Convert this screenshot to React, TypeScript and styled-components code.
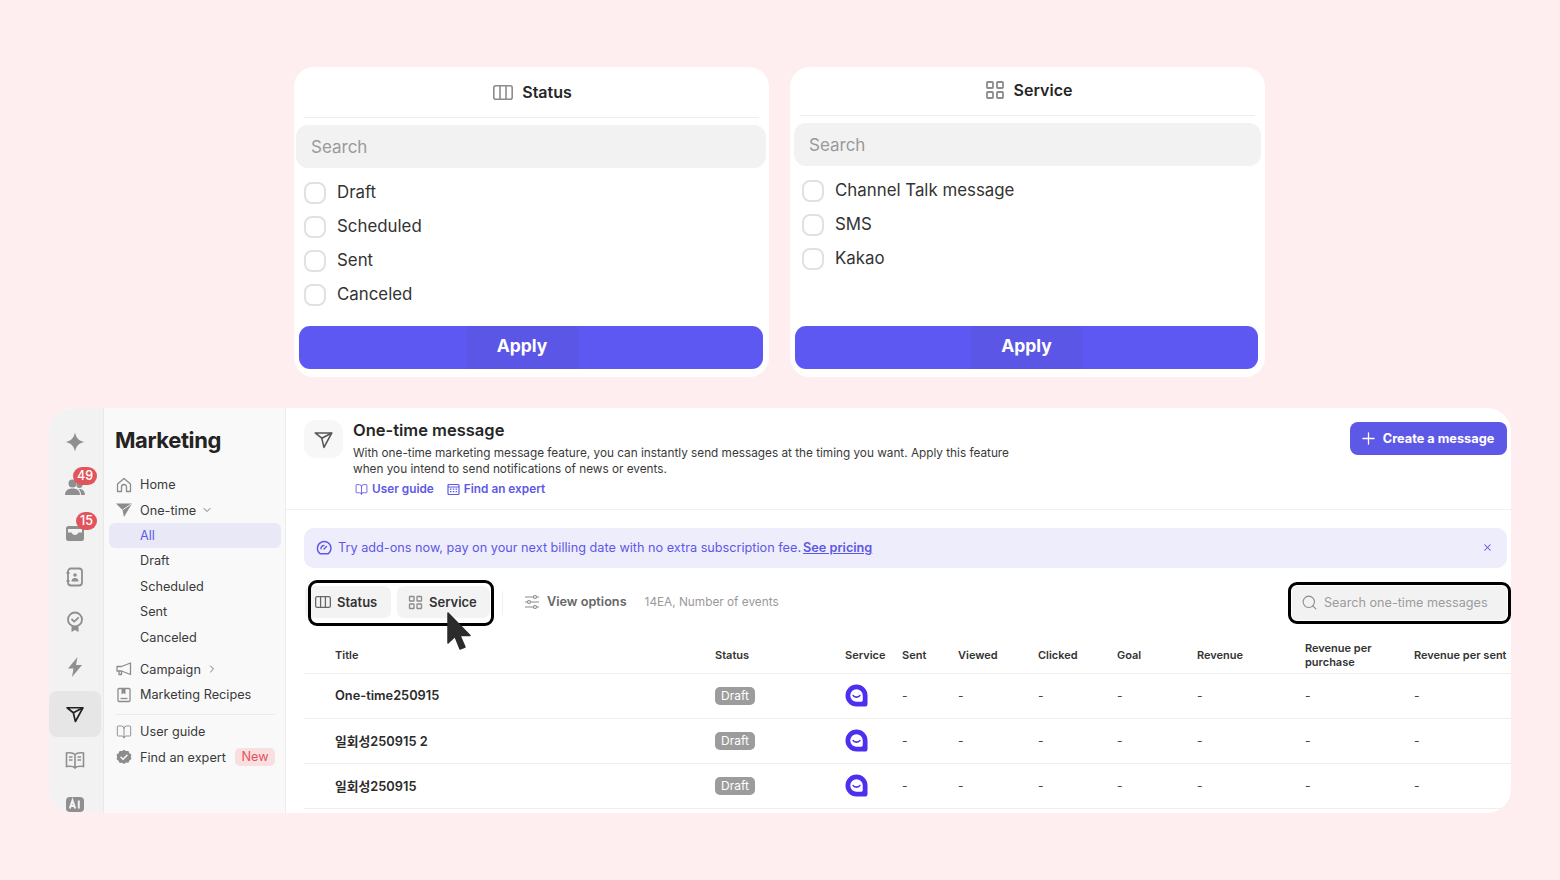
import React from 'react';
import styled, { createGlobalStyle } from 'styled-components';
import {
  BookOpen,
  ChevronDown,
  ChevronRight,
  Plus,
  Search,
  X,
} from 'lucide-react';

const GlobalStyle = createGlobalStyle`
  html, body {
    margin: 0;
    padding: 0;
    height: 880px;
    overflow: hidden;
    background: #feeef0;
  }
  body {
    font-family: Inter, "Noto Sans CJK KR", "Liberation Sans", sans-serif;
    color: #2a2a2a;
  }
  * { box-sizing: border-box; }
`;

const Page = styled.div`
  width: 1560px;
  height: 880px;
  padding: 67px 0 0 49px;
`;

const CardRow = styled.div`
  display: flex;
  gap: 21px;
  margin-left: 245px;
`;

const Card = styled.section`
  width: 475px;
  height: 310px;
  background: #fff;
  border-radius: 20px;
  display: flex;
  flex-direction: column;
`;

const CardHeader = styled.header<{ $height: number; $padLeft: number; $padBottom: number }>`
  height: ${p => p.$height}px;
  margin: 0 10px;
  padding: 0 0 ${p => p.$padBottom}px ${p => p.$padLeft}px;
  border-bottom: 1px solid #eeeeee;
  display: flex;
  align-items: center;
  justify-content: center;
  gap: 9px;
  font-size: 16px;
  font-weight: 600;
  color: #262626;
`;

const CardSearch = styled.div<{ $left: number; $right: number }>`
  height: 43px;
  margin: 7px ${p => p.$right}px 0 ${p => p.$left}px;
  padding-left: 15px;
  border-radius: 12px;
  background: #f2f2f2;
  display: flex;
  align-items: center;
  font-size: 17px;
  color: #9a9a9a;
`;

const CheckList = styled.ul<{ $left: number }>`
  list-style: none;
  margin: 8px 0 0;
  padding: 0 0 0 ${p => p.$left}px;
`;

const CheckItem = styled.li`
  height: 34px;
  display: flex;
  align-items: center;
  gap: 11px;
  font-size: 16.85px;
  color: #333;
`;

const CheckBox = styled.span`
  width: 22px;
  height: 22px;
  border-radius: 8px;
  border: 2px solid #e1e1e1;
  background: #fff;
`;

const CheckLabel = styled.span`
  margin-bottom: 2px;
`;

const ApplyButton = styled.button<{ $right: number; $shift: number }>`
  margin: auto ${p => p.$right}px 8px 5px;
  height: 43px;
  border: 0;
  border-radius: 11px;
  background: #5e58f2;
  color: #fff;
  font: 700 17.5px Inter, sans-serif;
  display: flex;
  justify-content: center;
  padding: 0 ${p => p.$shift}px 0 0;

  span {
    width: 111px;
    height: 100%;
    padding-bottom: 4px;
    display: flex;
    align-items: center;
    justify-content: center;
    background: #5c56e6;
  }
`;

const Panel = styled.div`
  width: 1462px;
  height: 405px;
  margin-top: 31px;
  background: #fff;
  border-radius: 24px;
  overflow: hidden;
  display: flex;
`;

const Rail = styled.nav`
  width: 55px;
  flex-shrink: 0;
  padding-top: 11px;
  background: #f2f2f2;
  border-right: 1px solid #e9e9e9;
`;

const RailItem = styled.div<{ $active?: boolean }>`
  position: relative;
  width: 52px;
  height: ${p => (p.$active ? 46 : 45)}px;
  margin-top: ${p => (p.$active ? 2 : 0)}px;
  border-radius: 8px;
  display: flex;
  align-items: center;
  justify-content: center;
  background: ${p => (p.$active ? '#e6e6e6' : 'transparent')};
  color: ${p => (p.$active ? '#222' : '#8f8f8f')};
`;

const CountBadge = styled.span<{ $left: number; $top: number }>`
  position: absolute;
  left: ${p => p.$left}px;
  top: ${p => p.$top}px;
  height: 18px;
  padding: 0 4px;
  border-radius: 9px;
  background: #e2545c;
  color: #fff;
  font-size: 12.5px;
  line-height: 18px;
  font-weight: 500;
`;

const Sidebar = styled.aside`
  width: 182px;
  flex-shrink: 0;
  background: #f9f9f9;
  border-right: 1px solid #ececec;
  padding: 16px 4px 0 5px;
`;

const SideTitle = styled.h2`
  margin: 0 0 16px 6px;
  font-size: 22px;
  line-height: 32px;
  font-weight: 700;
  letter-spacing: -0.4px;
  color: #232323;
`;

const SideRow = styled.div<{ $active?: boolean; $gapTop?: number }>`
  height: 25.4px;
  margin-top: ${p => p.$gapTop ?? 0}px;
  padding-left: 7px;
  border-radius: 6px;
  display: flex;
  align-items: center;
  gap: 8px;
  font-size: 12.7px;
  color: ${p => (p.$active ? '#5e58f2' : '#3a3a3a')};
  background: ${p => (p.$active ? '#e9e8f6' : 'transparent')};
  svg { flex-shrink: 0; }
`;

const SubLabel = styled.span`
  margin-left: 24px;
`;

const RowChevron = styled.span`
  display: flex;
  margin-left: -3px;
  color: #777;
`;

const SideDivider = styled.div`
  height: 1px;
  margin: 6px 6px 4.5px;
  background: #ebebeb;
`;

const NewTag = styled.span`
  margin-left: 1px;
  padding: 0 6.500px;
  height: 18px;
  border-radius: 5px;
  background: #fadfe1;
  color: #e2545c;
  font-size: 12.7px;
  line-height: 18px;
`;

const Main = styled.main`
  flex: 1;
  min-width: 0;
  display: flex;
  flex-direction: column;
`;

const PageHeader = styled.header`
  height: 102px;
  flex-shrink: 0;
  padding: 12px 4px 0 18px;
  border-bottom: 1px solid #f0f0f0;
  display: flex;
  align-items: flex-start;
  gap: 10px;
`;

const HeaderIcon = styled.div`
  width: 39px;
  height: 38px;
  border-radius: 12px;
  background: #f7f7f7;
  color: #555;
  display: flex;
  align-items: center;
  justify-content: center;
`;

const HeaderText = styled.div`
  flex: 1;
`;

const HeaderTitle = styled.h1`
  margin: -1px 0 0;
  font-size: 16.5px;
  line-height: 22px;
  font-weight: 600;
  color: #262626;
`;

const HeaderDesc = styled.p`
  margin: 4px 0 0;
  font-size: 11.77px;
  line-height: 16px;
  color: #3a3a3a;
  width: 680px;
`;

const LinkRow = styled.div`
  margin: 5px 0 0 2px;
  display: flex;
  gap: 13px;
`;

const GuideLink = styled.a`
  display: flex;
  align-items: center;
  gap: 4px;
  font-size: 11.8px;
  font-weight: 600;
  color: #5e58e6;
`;

const CreateButton = styled.button`
  height: 33px;
  width: 157px;
  margin-top: 2px;
  padding: 0 4px 0 0;
  border: 0;
  border-radius: 8px;
  background: #5e58e6;
  color: #fff;
  font: 700 12.75px Inter, sans-serif;
  display: flex;
  align-items: center;
  justify-content: center;
  gap: 5px;
`;

const Banner = styled.div`
  height: 40px;
  flex-shrink: 0;
  margin: 18px 4px 0 18px;
  padding: 0 14px 1px 12px;
  border-radius: 10px;
  background: #eeedfb;
  display: flex;
  align-items: center;
  gap: 6px;
  font-size: 12.7px;
  color: #5e58e6;

  b {
    font-weight: 600;
    text-decoration: underline;
    margin-left: -4px;
  }
  svg:last-child { margin-left: auto; }
`;

const Toolbar = styled.div`
  height: 46px;
  flex-shrink: 0;
  margin: 12px 0 0 19px;
  display: flex;
  align-items: center;
`;

const FilterGroup = styled.div`
  position: relative;
  height: 32px;
  margin-bottom: 2px;
  display: flex;
  gap: 6px;

  /* annotation frame drawn over the two chips */
  &::after {
    content: '';
    box-sizing: border-box;
    position: absolute;
    left: 3px;
    top: -6px;
    width: 186px;
    height: 46px;
    border: 3.5px solid #000;
    border-radius: 9px;
    pointer-events: none;
  }
`;

const FilterChip = styled.div<{ $width: number; $pad: number }>`
  width: ${p => p.$width}px;
  height: 32px;
  border-radius: 7px;
  background: #f3f3f3;
  display: flex;
  align-items: center;
  gap: 6px;
  padding-left: ${p => p.$pad}px;
  font-size: 13px;
  font-weight: 600;
  color: #333;
`;

const ToolbarDivider = styled.span`
  width: 1px;
  height: 24px;
  margin-left: 12px;
  background: #f0f0f0;
`;

const ViewOptions = styled.div`
  margin: 0 0 3px 21px;
  display: flex;
  align-items: center;
  gap: 7px;
  font-size: 12.7px;
  font-weight: 600;
  color: #666;
`;

const EventCount = styled.span`
  margin: 0 0 2px 18px;
  font-size: 11.8px;
  color: #9a9a9a;
`;

const SearchOutline = styled.div`
  margin-left: auto;
  width: 223px;
  height: 42px;
  border: 3.5px solid #000;
  border-radius: 9px;
  background: #fff;
  padding: 1px;
`;

const SearchField = styled.div`
  height: 100%;
  border-radius: 6px;
  background: #f2f2f2;
  display: flex;
  align-items: center;
  gap: 6px;
  padding: 0 0 2px 9px;
  font-size: 12.65px;
  color: #9c9c9c;
`;

const columns = '380px 130px 57px 56px 80px 79px 80px 108px 109px 1fr';

const TableHead = styled.div`
  height: 36px;
  margin: 12px 0 0 18px;
  padding: 0 0 2px 31px;
  border-bottom: 1px solid #eeeeee;
  display: grid;
  grid-template-columns: ${columns};
  align-items: center;
  font-size: 11px;
  font-weight: 600;
  line-height: 14px;
  color: #333;
  flex-shrink: 0;
  span { white-space: nowrap; }
`;

const TableRow = styled.div`
  height: 45px;
  margin-left: 18px;
  padding: 0 0 2px 31px;
  border-bottom: 1px solid #eeeeee;
  display: grid;
  grid-template-columns: ${columns};
  align-items: center;
  font-size: 12px;
  color: #444;
  flex-shrink: 0;
`;

const RowTitle = styled.span`
  font-size: 12.8px;
  font-weight: 600;
  color: #2b2b2b;
`;

const DraftBadge = styled.span`
  width: 40px;
  height: 18px;
  margin-top: 2px;
  border-radius: 5px;
  background: #9c9c9c;
  color: #fff;
  font-size: 12px;
  line-height: 18px;
  text-align: center;
`;

const Cursor = styled.svg`
  position: absolute;
  left: 141px;
  top: 25px;
  z-index: 2;
`;

/* drawn icons, not in the packages */

const Plane = ({ size = 20, width = 2 }: { size?: number; width?: number }) => (
  <svg width={size} height={size} viewBox="0 0 24 24" fill="none" stroke="currentColor" strokeWidth={width} strokeLinejoin="round">
    <path d="M2.5 4.5h19L12.5 21 10 10.5z" />
    <path d="M10 10.5 21.5 4.5" />
  </svg>
);

const WideColumns = ({ width = 20, color = '#8c8c8c' }: { width?: number; color?: string }) => (
  <svg width={width} height={width * 0.75} viewBox="0 0 20 15" fill="none" stroke={color} strokeWidth="1.600">
    <rect x="0.800" y="0.800" width="18.400" height="13.400" rx="2" />
    <path d="M7 .8v13.400M13 .8v13.400" />
  </svg>
);

const Grid4 = ({ size = 20 }: { size?: number }) => (
  <svg width={size} height={size} viewBox="0 0 20 20" fill="none" stroke="#8c8c8c" strokeWidth="1.8">
    <rect x="2" y="2" width="6" height="6" rx="0.8" />
    <rect x="12" y="2" width="6" height="6" rx="0.8" />
    <rect x="2" y="12" width="6" height="6" rx="0.8" />
    <rect x="12" y="12" width="6" height="6" rx="0.8" />
  </svg>
);

const Sparkle = () => (
  <svg width="20" height="20" viewBox="0 0 20 20" fill="currentColor">
    <path d="M10 .5c1 5.200 3.800 8.500 9.500 9.500-5.700 1-8.500 4.300-9.500 9.500-1-5.200-3.800-8.500-9.500-9.500C6.200 9 9 5.700 10 .5z" />
  </svg>
);

const People = () => (
  <svg width="22" height="20" viewBox="0 0 22 20" fill="currentColor">
    <circle cx="8.500" cy="6.500" r="4" />
    <circle cx="15.500" cy="8" r="3" />
    <path d="M1 18c0-4.500 3.200-6.500 7.500-6.500S16 13.500 16 18zM17 18c0-2.500-.8-4.500-2.300-6 3.600-.3 6.300 1.800 6.300 6z" />
  </svg>
);

const Inbox = () => (
  <svg width="20" height="17" viewBox="0 0 20 17" fill="currentColor" style={{ marginTop: 3 }}>
    <path d="M3.500 1h13A2.500 2.500 0 0 1 19 3.500v10a2.500 2.500 0 0 1-2.500 2.500h-13A2.500 2.500 0 0 1 1 13.500v-10A2.500 2.500 0 0 1 3.500 1zM3 4v3.500h3.500c.5 1.500 1.800 2.500 3.500 2.500s3-1 3.500-2.500H17V4z" fillRule="evenodd" />
  </svg>
);

const Contact = () => (
  <svg width="20" height="20" viewBox="0 0 20 20" fill="none" stroke="currentColor" strokeWidth="1.8">
    <rect x="3" y="1.500" width="14" height="17" rx="3" />
    <path d="M1.500 6h3M1.500 14h3" />
    <circle cx="10" cy="8" r="1.800" fill="currentColor" stroke="none" />
    <path d="M6.500 14.500c0-2.400 1.600-3.500 3.500-3.500s3.500 1.100 3.500 3.500z" fill="currentColor" stroke="none" />
  </svg>
);

const Award = () => (
  <svg width="20" height="22" viewBox="0 0 20 22" fill="none" stroke="currentColor" strokeWidth="1.8">
    <circle cx="10" cy="8.500" r="7" />
    <path d="M7 8.500l2.200 2.200L13.200 6.800" strokeLinecap="round" strokeLinejoin="round" />
    <path d="M6.500 15.500V21l3.500-2 3.500 2v-5.500z" fill="currentColor" stroke="none" />
  </svg>
);

const Bolt = () => (
  <svg width="18" height="20" viewBox="0 0 18 20" fill="currentColor">
    <path d="M11.500 0 2 11.500h5.500L6 20l10-12h-6z" />
  </svg>
);

const Magazine = () => (
  <svg width="20" height="20" viewBox="0 0 20 20" fill="none" stroke="currentColor" strokeWidth="1.6">
    <path d="M10 4.500C8.500 3 5 2.500 1.500 3v13.500c3.500-.5 7-.2 8.500 1.500 1.500-1.700 5-2 8.500-1.500V3C15 2.500 11.500 3 10 4.500zM10 4.500V18" />
    <path d="M4 7h3.500M4 10h3.500M12.500 7H16M12.500 10H16" />
  </svg>
);

const AiMark = () => (
  <svg width="18" height="15" viewBox="0 0 18 15">
    <rect width="18" height="15" rx="4" fill="currentColor" />
    <path d="M3.800 11.500 6.500 3.500 9.200 11.500M4.700 9h3.600M12.800 3.500v8" stroke="#f2f2f2" strokeWidth="2" fill="none" />
  </svg>
);

const Home = () => (
  <svg width="16" height="16" viewBox="0 0 16 16" fill="none" stroke="#8c8c8c" strokeWidth="1.300" strokeLinejoin="round">
    <path d="M1.500 7 8 1.500 14.500 7v7.500h-4V10a2.500 2.500 0 0 0-5 0v4.500h-4z" />
  </svg>
);

const SolidPlane = () => (
  <svg width="16" height="16" viewBox="0 0 16 16" fill="#8c8c8c">
    <path d="M0 1.500h16L8 15l-1.500-7z" />
    <path d="M15.500 1.800 6.500 8" stroke="#f9f9f9" strokeWidth="0.900" />
  </svg>
);

const Megaphone = () => (
  <svg width="16" height="16" viewBox="0 0 16 16" fill="none" stroke="#8c8c8c" strokeWidth="1.300" strokeLinejoin="round">
    <path d="M1 5.500h4.500L14.500 2v11.500L5.500 10H1zM3 10v3.500h2.500V10.200" />
  </svg>
);

const Recipe = () => (
  <svg width="16" height="16" viewBox="0 0 16 16" fill="none" stroke="#8c8c8c" strokeWidth="1.300">
    <rect x="2" y="1.500" width="12" height="13" rx="1" />
    <path d="M5.500 1.500v6l2-1.500 2 1.500v-6z" fill="#8c8c8c" stroke="none" />
    <path d="M4.500 11.500h7" />
  </svg>
);

const ExpertSeal = () => (
  <svg width="16" height="16" viewBox="0 0 16 16">
    <path d="M8 0l2 1.300 2.400-.1 1 2.200 2 1.300-.5 2.300.5 2.300-2 1.400-1 2.200-2.400-.1L8 14.300 6 13l-2.400.1-1-2.200-2-1.400.5-2.300L.6 4.700l2-1.300 1-2.200L6 1.300z" transform="translate(0 .8)" fill="#8c8c8c" />
    <path d="M5 8.200l2.100 2 3.900-4" stroke="#f9f9f9" strokeWidth="1.500" fill="none" strokeLinecap="round" />
  </svg>
);

const Calendar = () => (
  <svg width="13" height="13" viewBox="0 0 13 13" fill="none" stroke="#5e58e6" strokeWidth="1.200">
    <rect x="1" y="1.500" width="11" height="10" rx="1" />
    <path d="M1 4h11" />
    <path d="M3 6.200h1.500M5.800 6.200h1.500M8.600 6.200h1.500M3 8.700h1.500M5.800 8.700h1.500M8.600 8.700h1.500" />
  </svg>
);

const Gauge = () => (
  <svg width="16" height="16" viewBox="0 0 16 16" fill="none" stroke="#5e58e6" strokeWidth="1.400" strokeLinecap="round">
    <path d="M4.200 13.800A6.800 6.800 0 1 1 15 8c0 2.500-1 4.500-3 5.800z" />
    <path d="M5 8.800A3 3 0 0 1 8 5.500M8 9l2.500-2.500" />
  </svg>
);

const Sliders = () => (
  <svg width="16" height="16" viewBox="0 0 16 16" fill="none" stroke="#8c8c8c" strokeWidth="1.100">
    <path d="M1 3h8.500M12.500 3H15M1 8h2.500M6.500 8H15M1 13h8.500M12.500 13H15" />
    <circle cx="11" cy="3" r="1.500" />
    <circle cx="5" cy="8" r="1.500" />
    <circle cx="11" cy="13" r="1.500" />
  </svg>
);

const ChannelLogo = () => (
  <svg width="23" height="23" viewBox="0 0 24 24">
    <path d="M12 .5a11.500 11.500 0 1 0 0 23h8.500a3 3 0 0 0 3-3V12A11.500 11.500 0 0 0 12 .5z" fill="#4c30f0" />
    <path d="M12 5.500a6.500 6.500 0 1 0 0 13h5a1.500 1.500 0 0 0 1.500-1.500v-5A6.500 6.500 0 0 0 12 5.500z" fill="#fff" />
    <path d="M8.500 12c1 2.200 6 2.200 7 0" stroke="#4c30f0" strokeWidth="1.700" fill="none" strokeLinecap="round" />
  </svg>
);

interface FilterCardProps {
  icon: React.ReactNode;
  title: string;
  options: string[];
  headerHeight: number;
  headerPad: [number, number];
  searchInset: [number, number];
  listLeft: number;
  applyRight: number;
  applyShift: number;
}

const FilterCard: React.FC<FilterCardProps> = ({ icon, title, options, headerHeight, headerPad, searchInset, listLeft, applyRight, applyShift }) => (
  <Card>
    <CardHeader $height={headerHeight} $padLeft={headerPad[0]} $padBottom={headerPad[1]}>
      {icon}
      {title}
    </CardHeader>
    <CardSearch $left={searchInset[0]} $right={searchInset[1]}>Search</CardSearch>
    <CheckList $left={listLeft}>
      {options.map(o => (
        <CheckItem key={o}>
          <CheckBox />
          <CheckLabel>{o}</CheckLabel>
        </CheckItem>
      ))}
    </CheckList>
    <ApplyButton $right={applyRight} $shift={applyShift}>
      <span>Apply</span>
    </ApplyButton>
  </Card>
);

const rows = ['One-time250915', '일회성250915 2', '일회성250915'];
const metricCols = [0, 1, 2, 3, 4, 5, 6];

export default function App() {
  return (
    <Page>
      <GlobalStyle />
      <CardRow>
        <FilterCard
          icon={<WideColumns />}
          title="Status"
          options={['Draft', 'Scheduled', 'Sent', 'Canceled']}
          headerHeight={51}
          headerPad={[2, 0]}
          searchInset={[2, 3]}
          listLeft={10}
          applyRight={6}
          applyShift={18}
        />
        <FilterCard
          icon={<Grid4 />}
          title="Service"
          options={['Channel Talk message', 'SMS', 'Kakao']}
          headerHeight={49}
          headerPad={[2, 2]}
          searchInset={[4, 4]}
          listLeft={12}
          applyRight={7}
          applyShift={0}
        />
      </CardRow>

      <Panel>
        <Rail>
          <RailItem><Sparkle /></RailItem>
          <RailItem>
            <People />
            <CountBadge $left={24} $top={3}>49</CountBadge>
          </RailItem>
          <RailItem>
            <Inbox />
            <CountBadge $left={27} $top={3}>15</CountBadge>
          </RailItem>
          <RailItem><Contact /></RailItem>
          <RailItem><Award /></RailItem>
          <RailItem><Bolt /></RailItem>
          <RailItem $active><Plane /></RailItem>
          <RailItem><Magazine /></RailItem>
          <RailItem><AiMark /></RailItem>
        </Rail>

        <Sidebar>
          <SideTitle>Marketing</SideTitle>
          <SideRow><Home />Home</SideRow>
          <SideRow><SolidPlane />One-time<RowChevron><ChevronDown size={12} /></RowChevron></SideRow>
          <SideRow $active><SubLabel>All</SubLabel></SideRow>
          <SideRow><SubLabel>Draft</SubLabel></SideRow>
          <SideRow><SubLabel>Scheduled</SubLabel></SideRow>
          <SideRow><SubLabel>Sent</SubLabel></SideRow>
          <SideRow><SubLabel>Canceled</SubLabel></SideRow>
          <SideRow $gapTop={7}><Megaphone />Campaign<RowChevron><ChevronRight size={12} /></RowChevron></SideRow>
          <SideRow><Recipe />Marketing Recipes</SideRow>
          <SideDivider />
          <SideRow><BookOpen size={16} color="#8c8c8c" strokeWidth={1.4} />User guide</SideRow>
          <SideRow><ExpertSeal />Find an expert<NewTag>New</NewTag></SideRow>
        </Sidebar>

        <Main>
          <PageHeader>
            <HeaderIcon><Plane size={21} width={1.8} /></HeaderIcon>
            <HeaderText>
              <HeaderTitle>One-time message</HeaderTitle>
              <HeaderDesc>
                With one-time marketing message feature, you can instantly send messages at the timing you want. Apply this feature when you intend to send notifications of news or events.
              </HeaderDesc>
              <LinkRow>
                <GuideLink><BookOpen size={13} strokeWidth={1.6} />User guide</GuideLink>
                <GuideLink><Calendar />Find an expert</GuideLink>
              </LinkRow>
            </HeaderText>
            <CreateButton><Plus size={19} strokeWidth={1.6} />Create a message</CreateButton>
          </PageHeader>

          <Banner>
            <Gauge />
            Try add-ons now, pay on your next billing date with no extra subscription fee. <b>See pricing</b>
            <X size={11} strokeWidth={2.2} />
          </Banner>

          <Toolbar>
            <FilterGroup>
              <FilterChip $width={86} $pad={10}><WideColumns width={16} color="#666" />Status</FilterChip>
              <FilterChip $width={93} $pad={11}><Grid4 size={15} />Service</FilterChip>
              <Cursor width="28" height="42" viewBox="0 0 28 42">
                <path d="M2 2v30l7-6.500L14 38l5-2-5-11.500h10z" fill="#2b2b2b" stroke="#2b2b2b" strokeWidth="1.500" strokeLinejoin="round" />
              </Cursor>
            </FilterGroup>
            <ToolbarDivider />
            <ViewOptions><Sliders />View options</ViewOptions>
            <EventCount>14EA, Number of events</EventCount>
            <SearchOutline>
              <SearchField><Search size={17} color="#8c8c8c" strokeWidth={1.5} />Search one-time messages</SearchField>
            </SearchOutline>
          </Toolbar>

          <TableHead>
            <span>Title</span>
            <span>Status</span>
            <span>Service</span>
            <span>Sent</span>
            <span>Viewed</span>
            <span>Clicked</span>
            <span>Goal</span>
            <span>Revenue</span>
            <span>Revenue per<br />purchase</span>
            <span>Revenue per sent</span>
          </TableHead>
          {rows.map(title => (
            <TableRow key={title}>
              <RowTitle>{title}</RowTitle>
              <DraftBadge>Draft</DraftBadge>
              <ChannelLogo />
              {metricCols.map(c => <span key={c}>-</span>)}
            </TableRow>
          ))}
        </Main>
      </Panel>
    </Page>
  );
}
